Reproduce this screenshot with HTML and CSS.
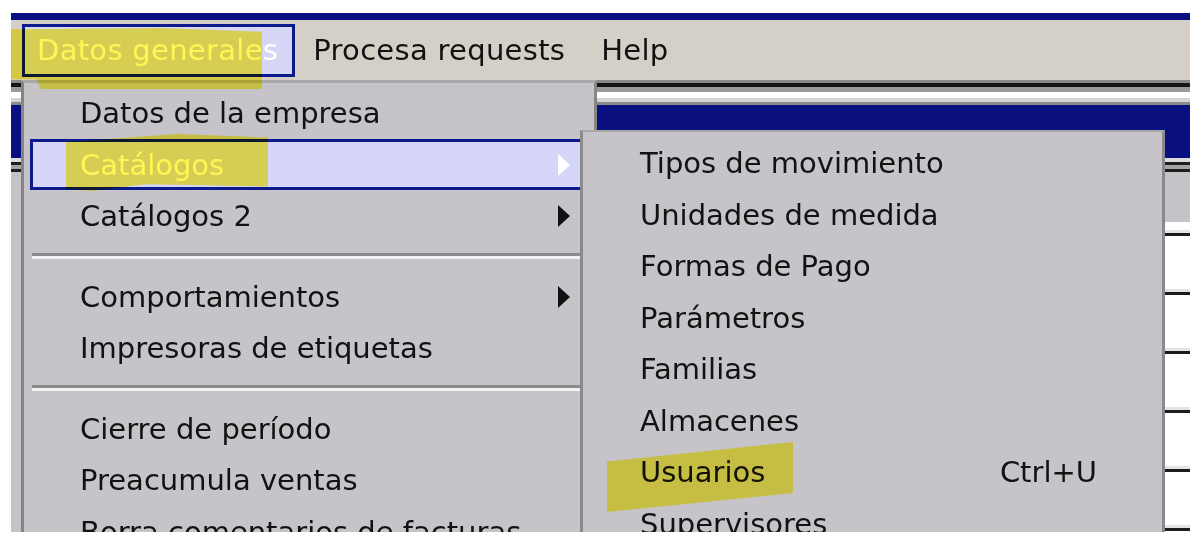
FILE: index.html
```html
<!DOCTYPE html>
<html lang="es">
<head>
    <meta charset="UTF-8">
    <meta name="viewport" content="width=device-width, initial-scale=1.0">
    <title>Datos generales</title>
    <link rel="stylesheet" href="styles.css">
</head>
<body>
    <div class="app">
        <div class="app-title"></div>

        <div class="menubar">
            <div class="menubar-item active">Datos generales</div>
            <div class="menubar-item">Procesa requests</div>
            <div class="menubar-item">Help</div>
        </div>

        <div class="frame-lines"></div>
        <div class="child-title"></div>

        <div class="child-body">
            <div class="grid-lines"></div>
            <div class="grid-header"></div>
            <div class="grid-rows">
                <div class="grid-row first"></div>
                <div class="grid-row"></div>
                <div class="grid-row"></div>
                <div class="grid-row"></div>
                <div class="grid-row"></div>
                <div class="grid-row"></div>
                <div class="grid-row"></div>
            </div>
        </div>

        <!-- menu Datos generales -->
        <div class="menu dropdown">
            <div class="menu-item">Datos de la empresa</div>
            <div class="menu-item selected">Catálogos <span class="arrow"></span></div>
            <div class="menu-item">Catálogos 2 <span class="arrow"></span></div>
            <div class="menu-sep"></div>
            <div class="menu-item">Comportamientos <span class="arrow"></span></div>
            <div class="menu-item">Impresoras de etiquetas</div>
            <div class="menu-sep"></div>
            <div class="menu-item">Cierre de período</div>
            <div class="menu-item">Preacumula ventas</div>
            <div class="menu-item">Borra comentarios de facturas</div>
        </div>

        <!-- submenu Catálogos -->
        <div class="menu submenu">
            <div class="menu-item">Tipos de movimiento</div>
            <div class="menu-item">Unidades de medida</div>
            <div class="menu-item">Formas de Pago</div>
            <div class="menu-item">Parámetros</div>
            <div class="menu-item">Familias</div>
            <div class="menu-item">Almacenes</div>
            <div class="menu-item">Usuarios <span class="shortcut">Ctrl+U</span></div>
            <div class="menu-item">Supervisores</div>
        </div>

        <!-- marcas de resaltador -->
        <div class="marker marker-menu"></div>
        <div class="marker marker-catalogos"></div>
        <div class="marker marker-usuarios"></div>
    </div>
</body>
</html>
```

FILE: styles.css
```css
body {
    margin: 0;
    background: #fff;
    font-family: "DejaVu Sans", Tahoma, sans-serif;
}

.app {
    position: relative;
    margin: 13px 0 0 11px;
    width: 1179px;
    height: 519px;
    overflow: hidden;
    background: #c5c3c7;
}

.app-title {
    height: 7px;
    background: #0a1080;
}

.menubar {
    height: 60px;
    display: flex;
    align-items: center;
    padding-left: 11px;
    background: #d4d0c8;
    font-size: 29px;
    letter-spacing: 0.3px;
    color: #121212;
}

.menubar-item {
    height: 53px;
    display: flex;
    align-items: center;
    padding: 0 15px;
    border: 3px solid transparent;
    box-sizing: border-box;
}

.menubar-item.active {
    background: #d6d6f6;
    border-color: #0c1a8c;
    color: #fff;
    padding: 0 14px 0 12px;
}

.frame-lines {
    height: 25px;
    background: linear-gradient(to bottom,
        #8a8a8a 0 3px, #151515 3px 7px, #9a9a9a 7px 12px,
        #fff 12px 18px, #d4d4d4 18px 22px, #8a8a8a 22px 25px);
}

.child-title {
    height: 53px;
    background: #0a1080;
}

.grid-lines {
    height: 17px;
    background: linear-gradient(to bottom,
        #dcdcdc 0 4px, #1e1e1e 4px 7px, #a4a4a4 7px 11px, #1e1e1e 11px 14px, #c5c3c7 14px);
}

.grid-header {
    height: 47px;
}

.grid-rows {
    margin-left: 10px;
    background: #fff;
}

.grid-row {
    height: 59px;
    box-sizing: border-box;
    border-bottom: 3px solid #1c1c1c;
    box-shadow: inset 0 -3px 0 #e4e4e4;
}

.grid-row.first {
    height: 14px;
}

/* menus */
.menu {
    position: absolute;
    background: #c6c4c9;
    font-size: 29px;
    color: #121212;
    box-sizing: border-box;
}

.dropdown {
    left: 10px;
    top: 67px;
    width: 576px;
    height: 480px;
    border: 3px solid #858585;
    border-top-color: #a8a8a8;
    padding-top: 4.25px;
}

.submenu {
    left: 569px;
    top: 117px;
    width: 585px;
    height: 440px;
    border: 3px solid #8a8a8a;
    border-top: 2px solid #a8a8a8;
    padding-top: 5.25px;
}

.menu-item {
    height: 51.5px;
    display: flex;
    align-items: center;
    margin: 0 6px;
    padding: 0 15px 0 47px;
    border: 3px solid transparent;
    box-sizing: border-box;
    white-space: nowrap;
}

.submenu .menu-item {
    padding: 0 56px 0 48px;
}

.menu-item.selected {
    background: #d6d6f8;
    border-color: #0c1a8c;
    color: #fff;
}

.arrow {
    margin-left: auto;
    width: 0;
    height: 0;
    border-top: 11px solid transparent;
    border-bottom: 11px solid transparent;
    border-left: 12px solid #111;
}

.selected .arrow {
    border-left-color: #fff;
}

.shortcut {
    margin-left: auto;
}

.menu-sep {
    height: 29px;
    display: flex;
    align-items: center;
    padding-left: 8px;
}

.menu-sep::before {
    content: "";
    flex: 1;
    border-top: 3px solid #8c8c8c;
    border-bottom: 3px solid #f2f2f2;
}

/* highlighter */
.marker {
    position: absolute;
    background: #fff647;
    mix-blend-mode: multiply;
    opacity: 0.92;
}

.marker-menu {
    left: 0;
    top: 15px;
    width: 251px;
    height: 61px;
    clip-path: polygon(0 2%, 60% 0, 100% 6%, 100% 100%, 12% 100%, 10% 84%, 0 84%);
}

.marker-catalogos {
    left: 55px;
    top: 121px;
    width: 202px;
    height: 57px;
    clip-path: polygon(0 14%, 55% 0, 100% 6%, 100% 92%, 40% 88%, 12% 100%, 0 96%);
}

.marker-usuarios {
    left: 596px;
    top: 429px;
    width: 186px;
    height: 70px;
    clip-path: polygon(0 28%, 100% 0, 100% 73%, 0 100%);
}
```
